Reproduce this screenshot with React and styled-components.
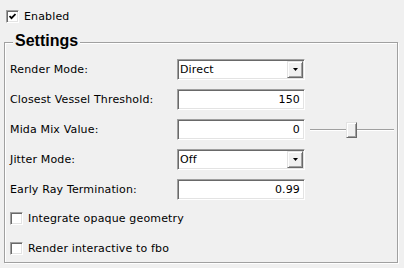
import React from 'react';
import styled, { createGlobalStyle, css } from 'styled-components';

const Global = createGlobalStyle`
  html, body { margin: 0; padding: 0; background: #f0f0f0; }
  body { font-family: "DejaVu Sans", sans-serif; font-size: 11px; color: #000; letter-spacing: 0.15px; }
`;

const sunken = css`
  box-sizing: border-box;
  border: 1px solid;
  border-color: #a0a0a0 #fff #fff #a0a0a0;
  box-shadow: inset 1px 1px #696969, inset -1px -1px #e3e3e3;
  background: #fff;
`;

const raised = css`
  box-sizing: border-box;
  border: 1px solid;
  border-color: #e3e3e3 #696969 #696969 #e3e3e3;
  box-shadow: inset 1px 1px #fff, inset -1px -1px #a0a0a0;
  background: #f0f0f0;
`;

const Page = styled.div`
  width: 404px;
  height: 268px;
  box-sizing: border-box;
  padding-top: 10px;
  display: flex;
  flex-direction: column;
`;

const CheckRow = styled.div`
  display: flex;
  align-items: center;
  gap: 5px;
  height: 13px;
  margin-left: ${(p) => p.$indent || 0}px;
  margin-top: ${(p) => p.$top || 0}px;
  white-space: nowrap;
`;

const Box = styled.div`
  ${sunken};
  width: 13px;
  height: 13px;
  display: flex;
  align-items: center;
  justify-content: center;
  flex: none;
`;

const GroupBox = styled.div`
  position: relative;
  margin: 19px 0 0 4px;
  width: 394px;
  height: 221px;
  box-sizing: border-box;
  border: 1px solid #a0a0a0;
  box-shadow: inset 1px 1px #fff, 1px 1px #fff;
  padding: 16px 0 0 5px;
`;

const Title = styled.span`
  position: absolute;
  left: 8px;
  top: -10px;
  padding: 0 2px;
  background: #f0f0f0;
  letter-spacing: 0;
  font: bold 16px/16px "Liberation Sans", Arial, sans-serif;
`;

const Form = styled.div`
  display: grid;
  grid-template-columns: 167px 128px auto;
  grid-auto-rows: 21px;
  row-gap: 9px;
  align-items: center;
`;

const Label = styled.div`
  grid-column: 1;
  white-space: nowrap;
`;

const Combo = styled.div`
  ${sunken};
  grid-column: 2;
  width: 128px;
  height: 21px;
  display: flex;
  align-items: center;
  padding: 0 1px 0 2px;
`;

const ComboText = styled.span`
  flex: 1;
`;

const ComboButton = styled.div`
  ${raised};
  width: 16px;
  height: 17px;
  display: flex;
  align-items: center;
  justify-content: center;
`;

const Field = styled.div`
  ${sunken};
  grid-column: 2;
  width: 128px;
  height: 21px;
  display: flex;
  align-items: center;
  justify-content: flex-end;
  padding-right: 4px;
`;

const SliderCell = styled.div`
  grid-column: 3;
  padding-left: 5px;
  display: flex;
  align-items: center;
`;

const Track = styled.div`
  position: relative;
  width: 84px;
  height: 16px;
  display: flex;
  align-items: center;
`;

const TrackLine = styled.div`
  width: 100%;
  height: 2px;
  box-sizing: border-box;
  border-top: 1px solid #a0a0a0;
  border-bottom: 1px solid #fff;
  background: #696969;
`;

const Thumb = styled.div`
  ${raised};
  position: absolute;
  top: 0;
  width: 11px;
  height: 16px;
`;

const Check = () => (
  <svg width="7" height="7" viewBox="0 0 7 7">
    <path d="M0.5 3 L2.5 5.2 L6.5 1" fill="none" stroke="#000" strokeWidth="1.8" />
  </svg>
);

const Arrow = () => (
  <svg width="5" height="3" viewBox="0 0 5 3">
    <polygon points="0,0 5,0 2.5,3" fill="#000" />
  </svg>
);

const Dropdown = ({ value }) => (
  <Combo>
    <ComboText>{value}</ComboText>
    <ComboButton>
      <Arrow />
    </ComboButton>
  </Combo>
);

const Slider = ({ value, max }) => (
  <SliderCell>
    <Track>
      <TrackLine />
      <Thumb style={{ left: `${Math.round((value / max) * 72)}px` }} />
    </Track>
  </SliderCell>
);

export default function App() {
  return (
    <>
      <Global />
      <Page>
        <CheckRow $indent={6}>
          <Box>
            <Check />
          </Box>
          <span>Enabled</span>
        </CheckRow>
        <GroupBox>
          <Title>Settings</Title>
          <Form>
            <Label>Render Mode:</Label>
            <Dropdown value="Direct" />
            <Label>Closest Vessel Threshold:</Label>
            <Field>150</Field>
            <Label>Mida Mix Value:</Label>
            <Field>0</Field>
            <Slider value={1} max={2} />
            <Label>Jitter Mode:</Label>
            <Dropdown value="Off" />
            <Label>Early Ray Termination:</Label>
            <Field>0.99</Field>
          </Form>
          <CheckRow $top={12}>
            <Box />
            <span>Integrate opaque geometry</span>
          </CheckRow>
          <CheckRow $top={17}>
            <Box />
            <span>Render interactive to fbo</span>
          </CheckRow>
        </GroupBox>
      </Page>
    </>
  );
}
